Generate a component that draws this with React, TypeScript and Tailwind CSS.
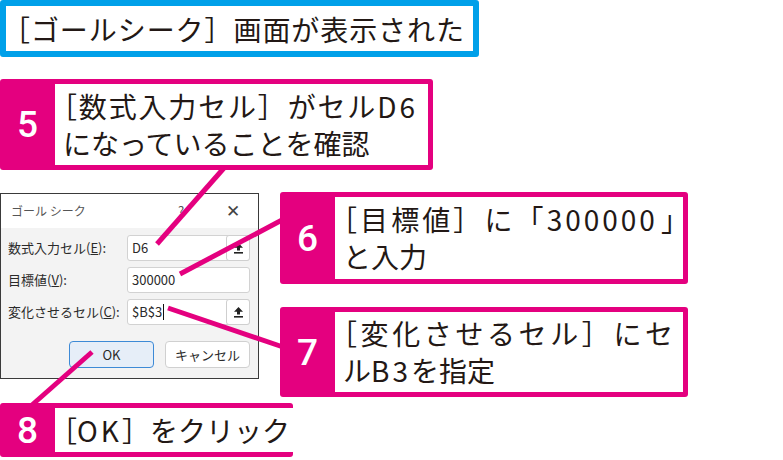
import React from "react";

function Bracket() {
  return <span className="[font-feature-settings:'halt']">［</span>;
}

function UpIcon() {
  return (
    <svg width="11" height="12" viewBox="0 0 11 12">
      <path d="M5.5 1 L10 5.8 H7 V8.6 H4 V5.8 H1 Z" fill="#222" />
      <rect x="1" y="10" width="9" height="1.6" fill="#222" />
    </svg>
  );
}

function Dialog() {
  return (
    <div className="mt-[1px] w-[259px] h-[186px] border border-[#3a3a3a] bg-[#f3f3f3] flex flex-col font-['Noto_Sans_CJK_JP',sans-serif] text-[13px] text-[#2a2a2a]">
      <div className="h-[34px] bg-white flex items-center pl-[10px] whitespace-nowrap">
        <span className="w-[167px] shrink-0 text-[12px] text-[#555]">ゴール シーク</span>
        <span className="w-[8px] shrink-0 text-[13px] text-[#555]">?</span>
        <span className="ml-[40px] shrink-0 text-[#444] text-[17px] leading-none font-['DejaVu_Sans',sans-serif] font-light">✕</span>
      </div>
      <div className="flex-1 flex flex-col pl-[7px] pr-[8px] pt-[7px]">
        <div className="grid grid-cols-[119px_123px] gap-y-[6px]">
          <div className="h-[26px] flex items-center whitespace-nowrap">
            数式入力セル(<span className="underline">E</span>):
          </div>
          <div className="h-[26px] flex bg-white border border-[#d2d2d2] rounded-[3px]">
            <div className="flex-1 flex items-center pl-[4px]">D6</div>
            <div className="w-[24px] -my-px -mr-px flex items-center justify-center border border-[#cfcfcf] rounded-[3px] bg-white">
              <UpIcon />
            </div>
          </div>
          <div className="h-[26px] flex items-center whitespace-nowrap">
            目標値(<span className="underline">V</span>):
          </div>
          <div className="h-[26px] flex items-center pl-[4px] bg-white border border-[#d2d2d2] rounded-[3px]">300000</div>
          <div className="h-[26px] flex items-center whitespace-nowrap">
            変化させるセル(<span className="underline">C</span>):
          </div>
          <div className="h-[26px] flex bg-white border border-[#d2d2d2] rounded-[3px]">
            <div className="flex-1 flex items-center pl-[4px]">
              $B$3<span className="ml-px w-px h-[16px] bg-[#111]"></span>
            </div>
            <div className="w-[24px] -my-px -mr-px flex items-center justify-center border border-[#cfcfcf] rounded-[3px] bg-white">
              <UpIcon />
            </div>
          </div>
        </div>
        <div className="mt-[16px] flex justify-end gap-[11px]">
          <div className="w-[85px] h-[27px] flex items-center justify-center rounded-[4px] border border-[#3d8ad6] bg-[#e6eef8]">OK</div>
          <div className="w-[85px] h-[27px] flex items-center justify-center rounded-[4px] border border-[#d0d0d0] bg-white">キャンセル</div>
        </div>
      </div>
    </div>
  );
}

function Callout({
  num,
  outer,
  children,
}: {
  num: string;
  outer: string;
  children: React.ReactNode;
}) {
  return (
    <div className={outer}>
      <div className="w-[55px] shrink-0 flex items-center justify-center text-white font-['Roboto',sans-serif] font-medium text-[37px] leading-none">
        {num}
      </div>
      <div className="flex-1 bg-white flex flex-col justify-center pl-[8px] text-[28px] leading-[37px] text-[#231815] whitespace-nowrap">
        {children}
      </div>
    </div>
  );
}

export default function App() {
  return (
    <div className="relative w-[783px] h-[460px] overflow-hidden bg-white font-['Noto_Sans_CJK_JP',sans-serif] text-[#231815]">
      <div className="flex flex-col items-start">
        <div className="w-[479px] h-[57px] border-[6px] border-[#00a0e9] rounded-[3px] bg-white flex flex-col justify-center pl-[10px] pr-[9px] text-[28px] leading-none whitespace-nowrap">
          <div className="text-justify [text-align-last:justify]">
            <Bracket />ゴールシーク］画面が表示された
          </div>
        </div>

        <Callout num="5" outer="mt-[22px] w-[433px] h-[91px] flex bg-[#e4007f] rounded-[3px] py-[5px] pr-[5px]">
          <div className="pr-[10px] text-justify [text-align-last:justify]">
            <Bracket />数式入力セル］がセル<span className="tracking-[3px]">D6</span>
          </div>
          <div>になっていることを確認</div>
        </Callout>

        <div className="mt-[22px] flex items-start">
          <Dialog />
          <div className="ml-[21px] flex flex-col gap-[23px]">
            <Callout num="6" outer="w-[408px] h-[92px] flex bg-[#e4007f] rounded-[3px] py-[5px] pr-[5px]">
              <div className="pr-[8px] text-justify [text-align-last:justify]">
                <Bracket />目標値］に「<span className="tracking-[3px]">300000</span>
                <span className="[font-feature-settings:'halt']">」</span>
              </div>
              <div>と入力</div>
            </Callout>
            <Callout num="7" outer="w-[408px] h-[90px] flex bg-[#e4007f] rounded-[3px] py-[5px] pr-[5px]">
              <div className="pr-[10px] text-justify [text-align-last:justify]">
                <Bracket />変化させるセル］にセ
              </div>
              <div>
                ル<span className="tracking-[3px]">B3</span>を指定
              </div>
            </Callout>
          </div>
        </div>

        <Callout num="8" outer="mt-[6px] w-[293px] h-[54px] flex bg-[#e4007f] rounded-[3px] py-[5px] pr-[5px]">
          <div className="pr-[10px] text-justify [text-align-last:justify]">
            <Bracket />
            <span className="tracking-[3px]">OK</span>］をクリック
          </div>
        </Callout>
      </div>

      <svg className="absolute inset-0 pointer-events-none" width="783" height="460" viewBox="0 0 783 460">
        <g stroke="#e4007f" strokeWidth="5" strokeLinecap="butt">
          <line x1="224" y1="168" x2="157" y2="244" />
          <line x1="282" y1="220" x2="180" y2="274" />
          <line x1="168" y1="308" x2="283" y2="347" />
          <line x1="92" y1="352" x2="32" y2="405" />
        </g>
      </svg>
    </div>
  );
}
